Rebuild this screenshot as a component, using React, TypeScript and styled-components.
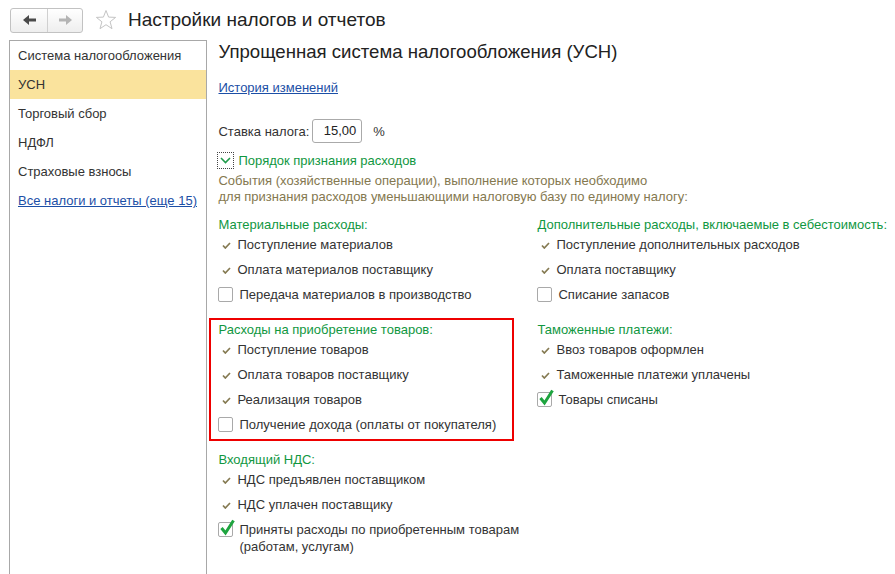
import React from "react";
import styled, { createGlobalStyle } from "styled-components";

const GlobalStyle = createGlobalStyle`
  html, body { margin: 0; padding: 0; background: #fff; }
  body {
    font-family: "Liberation Sans", Arial, sans-serif;
    font-size: 13px;
    color: #333;
    overflow: hidden;
  }
  #root { height: 574px; }
`;

const Window = styled.div`
  display: flex;
  flex-direction: column;
  width: 895px;
  height: 574px;
`;

const TopBar = styled.div`
  height: 40px;
  flex: none;
  display: flex;
  align-items: center;
  padding-left: 10px;
  box-sizing: border-box;
`;

const NavGroup = styled.div`
  display: flex;
  height: 25px;
  border: 1px solid #c2c2c2;
  border-radius: 3px;
  background: linear-gradient(#ffffff, #eeeeee);
  box-sizing: border-box;
`;

const NavButton = styled.div<{ $first?: boolean }>`
  width: ${(p) => (p.$first ? 36 : 34)}px;
  display: flex;
  align-items: center;
  justify-content: center;
  border-left: ${(p) => (p.$first ? "none" : "1px solid #d0d0d0")};
`;

const StarBox = styled.div`
  margin-left: 12px;
  width: 22px;
  height: 22px;
  display: flex;
`;

const WindowTitle = styled.div`
  margin-left: 11px;
  font-size: 19px;
  color: #222;
`;

const Body = styled.div`
  flex: 1;
  display: flex;
  min-height: 0;
`;

const Sidebar = styled.div`
  margin-left: 9px;
  width: 199px;
  box-sizing: border-box;
  border: 1px solid #a8a8a8;
  border-bottom: none;
  display: flex;
  flex-direction: column;
`;

const SideItem = styled.div<{ $active?: boolean }>`
  height: 29px;
  line-height: 29px;
  padding-left: 8px;
  background: ${(p) => (p.$active ? "#fae39d" : "transparent")};
  color: #333;
  white-space: nowrap;
`;

const Link = styled.a`
  color: #1c4fa6;
  text-decoration: underline;
  cursor: pointer;
`;

const Main = styled.div`
  flex: 1;
  padding: 1px 0 0 11px;
  display: flex;
  flex-direction: column;
  align-items: flex-start;
`;

const PageTitle = styled.div`
  font-size: 18.6px;
  line-height: 22px;
  color: #222;
`;

const HistoryLink = styled(Link)`
  margin-top: 17px;
  line-height: 16px;
`;

const RateRow = styled.div`
  margin-top: 23px;
  display: flex;
  align-items: center;
  height: 24px;
`;

const RateInput = styled.div`
  margin-left: 3px;
  width: 50px;
  height: 24px;
  box-sizing: border-box;
  border: 1px solid #aaaaaa;
  border-radius: 3px;
  text-align: right;
  padding-right: 5px;
  line-height: 22px;
  color: #222;
`;

const Percent = styled.span`
  margin-left: 11px;
`;

const CollapseHeader = styled.div`
  margin-top: 9px;
  margin-left: -1px;
  display: flex;
  align-items: center;
  height: 17px;
  gap: 4px;
  color: #11973f;
`;

const FocusBox = styled.div`
  width: 17px;
  height: 17px;
  box-sizing: border-box;
  border: 1px dotted #444;
  display: flex;
  align-items: center;
  justify-content: center;
`;

const Description = styled.div`
  margin-top: 4px;
  line-height: 16px;
  color: #84784f;
`;

const Groups = styled.div`
  margin-top: 8px;
  margin-left: -9px;
  display: grid;
  grid-template-columns: 305px 1fr;
  column-gap: 14px;
  row-gap: 7px;
  align-self: stretch;
`;

const Group = styled.div<{ $boxed?: boolean; $wide?: boolean }>`
  border: 2px solid ${(p) => (p.$boxed ? "#ee0000" : "transparent")};
  padding: 0 6px 5px 7px;
  grid-column: ${(p) => (p.$wide ? "1 / -1" : "auto")};
`;

const GroupTitle = styled.div`
  line-height: 18px;
  padding-top: 1px;
  color: #11973f;
  white-space: nowrap;
`;

const Items = styled.div`
  display: flex;
  flex-direction: column;
  gap: 5px;
`;

const Row = styled.div`
  display: flex;
  align-items: flex-start;
  min-height: 20px;
`;

const MarkSlot = styled.div`
  width: 19px;
  height: 20px;
  flex: none;
  display: flex;
  align-items: center;
  padding: 3px 0 0 4px;
  box-sizing: border-box;
`;

const BoxSlot = styled.div`
  width: 21px;
  height: 20px;
  flex: none;
  display: flex;
  align-items: center;
  padding-top: 1px;
  box-sizing: border-box;
`;

const Box = styled.div`
  width: 15px;
  height: 15px;
  box-sizing: border-box;
  border: 1px solid #a9a9a9;
  border-radius: 2px;
  background: #fff;
  position: relative;
`;

const CheckOverlay = styled.svg`
  position: absolute;
  left: 1px;
  top: -4px;
  overflow: visible;
`;

const Label = styled.div<{ $max?: number }>`
  padding: 1.5px 0;
  line-height: 17px;
  color: #333;
  max-width: ${(p) => (p.$max ? `${p.$max}px` : "none")};
  white-space: ${(p) => (p.$max ? "normal" : "nowrap")};
`;

const Arrow = ({ dir, color }: { dir: "left" | "right"; color: string }) => (
  <svg width="13" height="10" viewBox="0 0 13 10">
    <g transform={dir === "right" ? "translate(13 0) scale(-1 1)" : undefined}>
      <polygon points="0,5 6,0 6,10" fill={color} />
      <rect x="5" y="3.5" width="8" height="3" fill={color} />
    </g>
  </svg>
);

const Star = () => (
  <svg width="22" height="22" viewBox="0 0 22 22">
    <polygon
      points="11,1.5 13.6,8.1 20.6,8.4 15.1,12.8 17,19.7 11,15.7 5,19.7 6.9,12.8 1.4,8.4 8.4,8.1"
      fill="none"
      stroke="#c4c4c4"
      strokeWidth="1"
      strokeLinejoin="round"
    />
  </svg>
);

const Chevron = () => (
  <svg width="11" height="7" viewBox="0 0 11 7">
    <polyline points="1,1 5.5,5.5 10,1" fill="none" stroke="#1f9a4a" strokeWidth="1.6" />
  </svg>
);

const Mark = () => (
  <svg width="9" height="7" viewBox="0 0 9 7">
    <polyline points="1,3.5 3.3,6 8,1" fill="none" stroke="#857a52" strokeWidth="1.7" />
  </svg>
);

type Item = { text: string; kind: "mark" | "box" | "checked"; max?: number };

const CheckItem = ({ item }: { item: Item }) => {
  if (item.kind === "mark") {
    return (
      <Row>
        <MarkSlot>
          <Mark />
        </MarkSlot>
        <Label>{item.text}</Label>
      </Row>
    );
  }
  return (
    <Row>
      <BoxSlot>
        <Box>
          {item.kind === "checked" && (
            <CheckOverlay width="15" height="16" viewBox="0 0 15 16">
              <polyline
                points="1.5,9 5.5,14 13.5,1.5"
                fill="none"
                stroke="#1ea43f"
                strokeWidth="3"
                strokeLinejoin="miter"
              />
            </CheckOverlay>
          )}
        </Box>
      </BoxSlot>
      <Label $max={item.max}>{item.text}</Label>
    </Row>
  );
};

type GroupData = { title: string; items: Item[]; boxed?: boolean; wide?: boolean };

const groups: GroupData[] = [
  {
    title: "Материальные расходы:",
    items: [
      { text: "Поступление материалов", kind: "mark" },
      { text: "Оплата материалов поставщику", kind: "mark" },
      { text: "Передача материалов в производство", kind: "box" },
    ],
  },
  {
    title: "Дополнительные расходы, включаемые в себестоимость:",
    items: [
      { text: "Поступление дополнительных расходов", kind: "mark" },
      { text: "Оплата поставщику", kind: "mark" },
      { text: "Списание запасов", kind: "box" },
    ],
  },
  {
    title: "Расходы на приобретение товаров:",
    boxed: true,
    items: [
      { text: "Поступление товаров", kind: "mark" },
      { text: "Оплата товаров поставщику", kind: "mark" },
      { text: "Реализация товаров", kind: "mark" },
      { text: "Получение дохода (оплаты от покупателя)", kind: "box" },
    ],
  },
  {
    title: "Таможенные платежи:",
    items: [
      { text: "Ввоз товаров оформлен", kind: "mark" },
      { text: "Таможенные платежи уплачены", kind: "mark" },
      { text: "Товары списаны", kind: "checked" },
    ],
  },
  {
    title: "Входящий НДС:",
    wide: true,
    items: [
      { text: "НДС предъявлен поставщиком", kind: "mark" },
      { text: "НДС уплачен поставщику", kind: "mark" },
      { text: "Приняты расходы по приобретенным товарам (работам, услугам)", kind: "checked", max: 290 },
    ],
  },
];

const sideItems = ["Система налогообложения", "УСН", "Торговый сбор", "НДФЛ", "Страховые взносы"];

export default function App() {
  return (
    <>
      <GlobalStyle />
      <Window>
        <TopBar>
          <NavGroup>
            <NavButton $first>
              <Arrow dir="left" color="#4a4a4a" />
            </NavButton>
            <NavButton>
              <Arrow dir="right" color="#b4b4b4" />
            </NavButton>
          </NavGroup>
          <StarBox>
            <Star />
          </StarBox>
          <WindowTitle>Настройки налогов и отчетов</WindowTitle>
        </TopBar>
        <Body>
          <Sidebar>
            {sideItems.map((s) => (
              <SideItem key={s} $active={s === "УСН"}>
                {s}
              </SideItem>
            ))}
            <SideItem>
              <Link>Все налоги и отчеты (еще 15)</Link>
            </SideItem>
          </Sidebar>
          <Main>
            <PageTitle>Упрощенная система налогообложения (УСН)</PageTitle>
            <HistoryLink>История изменений</HistoryLink>
            <RateRow>
              <span>Ставка налога:</span>
              <RateInput>15,00</RateInput>
              <Percent>%</Percent>
            </RateRow>
            <CollapseHeader>
              <FocusBox>
                <Chevron />
              </FocusBox>
              <span>Порядок признания расходов</span>
            </CollapseHeader>
            <Description>
              События (хозяйственные операции), выполнение которых необходимо
              <br />
              для признания расходов уменьшающими налоговую базу по единому налогу:
            </Description>
            <Groups>
              {groups.map((g) => (
                <Group key={g.title} $boxed={g.boxed} $wide={g.wide}>
                  <GroupTitle>{g.title}</GroupTitle>
                  <Items>
                    {g.items.map((it) => (
                      <CheckItem key={it.text} item={it} />
                    ))}
                  </Items>
                </Group>
              ))}
            </Groups>
          </Main>
        </Body>
      </Window>
    </>
  );
}
